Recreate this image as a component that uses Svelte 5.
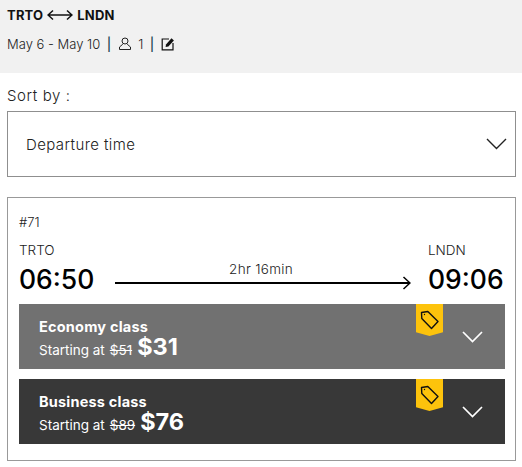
<script>
	const legs = [
		{ name: 'Economy class', was: '$51', price: '$31', tone: 'economy' },
		{ name: 'Business class', was: '$89', price: '$76', tone: 'business' }
	];
</script>

<div class="page">
	<header class="summary">
		<div class="route">
			<span>TRTO</span>
			<svg class="swap" width="26" height="12" viewBox="0 0 26 12" fill="none" stroke="#111" stroke-width="1.5">
				<path d="M1 6H25M6 1.5 1 6l5 4.5M20 1.5 25 6l-5 4.5" />
			</svg>
			<span>LNDN</span>
		</div>
		<div class="trip">
			<span>May 6 - May 10</span>
			<span class="sep">|</span>
			<svg width="14" height="14" viewBox="0 0 14 14" fill="none" stroke="#222" stroke-width="1">
				<circle cx="7" cy="4" r="3" />
				<path d="M4.8 7.2 1.5 10v2.5h11V10L9.2 7.2" />
			</svg>
			<span>1</span>
			<span class="sep">|</span>
			<svg width="14" height="14" viewBox="0 0 14 14" fill="none">
				<path d="M8 2H1.200v10.800H12V6" stroke="#111" stroke-width="1.200" />
				<path d="M5 7.500 10.500 1.200l2.400 2.200L7.400 9.500l-2.800.6z" fill="#111" />
			</svg>
		</div>
	</header>

	<main class="content">
		<div class="sort-label">Sort by :</div>
		<div class="select">
			<span>Departure time</span>
			<svg width="21" height="12" viewBox="0 0 21 12" fill="none" stroke="#222" stroke-width="1.400">
				<path d="M1 1l9.500 9.500L20 1" />
			</svg>
		</div>

		<section class="card">
			<div class="number">#71</div>
			<div class="times">
				<div class="stop">
					<div class="code">TRTO</div>
					<div class="time">06:50</div>
				</div>
				<div class="flight">
					<div class="duration">2hr 16min</div>
					<svg class="arrow" width="296" height="14" viewBox="0 0 296 14" fill="none" stroke="#000">
						<path d="M0 7H295" stroke-width="2" />
						<path d="M288.500 1 295 7l-6.500 6" stroke-width="1.500" />
					</svg>
				</div>
				<div class="stop">
					<div class="code">LNDN</div>
					<div class="time">09:06</div>
				</div>
			</div>

			{#each legs as leg}
				<div class="fare {leg.tone}">
					<div class="fare-text">
						<div class="fare-name">{leg.name}</div>
						<div class="fare-price">
							<span>Starting at</span>
							<s>{leg.was}</s>
							<strong>{leg.price}</strong>
						</div>
					</div>
					<div class="ribbon">
						<svg width="20" height="20" viewBox="0 0 20 20" fill="none" stroke="#111" stroke-width="1.400" stroke-linejoin="round">
							<path d="M1.500 2.500 7.800 1.500 18 11.500 11.500 18.500 1.800 8.500z" />
							<circle cx="4.500" cy="4.500" r="0.700" fill="#111" stroke="none" />
						</svg>
					</div>
					<svg class="chevron" width="21" height="12" viewBox="0 0 21 12" fill="none" stroke="#fff" stroke-width="1.700">
						<path d="M1 1l9.500 9.500L20 1" />
					</svg>
				</div>
			{/each}
		</section>
	</main>
</div>

<style>
	:global(body) {
		margin: 0;
		background: #fff;
	}

	.page {
		width: 522px;
		height: 467px;
		overflow: hidden;
		color: #222;
		font-family: 'Inter', 'Liberation Sans', sans-serif;
	}

	.summary {
		box-sizing: border-box;
		height: 73px;
		padding: 7px 7px 0;
		background: #f1f1f1;
	}

	.route {
		display: flex;
		align-items: center;
		gap: 4px;
		height: 16px;
		font-size: 13px;
		font-weight: 700;
		letter-spacing: 0.2px;
		color: #111;
	}

	.trip {
		display: flex;
		align-items: center;
		gap: 6.500px;
		height: 18px;
		margin-top: 12px;
		font-size: 13px;
		font-weight: 300;
	}

	.sep {
		color: #245;
		font-weight: 500;
	}

	.content {
		padding: 0 7px;
	}

	.sort-label {
		height: 38px;
		line-height: 45px;
		font-size: 15px;
		font-weight: 300;
		letter-spacing: 0.6px;
		color: #222;
	}

	.select {
		box-sizing: border-box;
		display: flex;
		align-items: center;
		justify-content: space-between;
		width: 509px;
		height: 66px;
		padding: 0 8px 0 18px;
		border: 1px solid #8f8f8f;
		font-size: 15px;
		font-weight: 300;
		letter-spacing: 0.4px;
	}

	.card {
		box-sizing: border-box;
		width: 509px;
		height: 264px;
		margin-top: 20px;
		padding: 16px 11px 0;
		border: 1px solid #999;
	}

	.number {
		height: 20px;
		font-size: 13px;
		font-weight: 300;
	}

	.times {
		display: flex;
		align-items: flex-end;
		height: 62px;
		margin-top: -1px;
	}

	.stop {
		flex: none;
		width: 96px;
	}

	.stop:last-child {
		width: 76px;
	}

	.code {
		font-size: 13.500px;
		font-weight: 300;
		line-height: 16px;
		color: #222;
	}

	.time {
		margin-top: 5px;
		font-size: 26.500px;
		font-weight: 500;
		line-height: 32px;
		white-space: nowrap;
		color: #000;
	}

	.flight {
		flex: 1;
		min-width: 0;
		padding-bottom: 5px;
	}

	.duration {
		width: 292px;
		height: 14px;
		font-size: 13.500px;
		font-weight: 300;
		line-height: 13px;
		letter-spacing: 0.3px;
		text-align: center;
	}

	.arrow {
		display: block;
		margin-top: -1px;
	}

	.fare {
		box-sizing: border-box;
		position: relative;
		display: flex;
		align-items: center;
		justify-content: space-between;
		width: 486px;
		height: 65px;
		padding: 0 22px 0 20px;
		margin-top: 10px;
		color: #fff;
	}

	.times + .fare {
		margin-top: 9px;
	}

	.economy {
		background: #717171;
	}

	.business {
		background: #383838;
	}

	.fare-text {
		padding-top: 7px;
	}

	.fare-name {
		font-size: 14.500px;
		font-weight: 700;
		letter-spacing: 0.2px;
		line-height: 17px;
	}

	.fare-price {
		display: flex;
		align-items: baseline;
		gap: 5px;
		font-size: 13.500px;
		font-weight: 400;
		line-height: 24px;
	}

	.fare-price strong {
		font-size: 23.500px;
		font-weight: 700;
	}

	.ribbon {
		position: absolute;
		top: 0;
		left: 397px;
		display: flex;
		justify-content: center;
		width: 27px;
		height: 32px;
		padding-top: 6px;
		box-sizing: border-box;
		background: #fdc30c;
		clip-path: polygon(0 0, 100% 0, 100% 88%, 50% 100%, 0 88%);
	}
</style>
